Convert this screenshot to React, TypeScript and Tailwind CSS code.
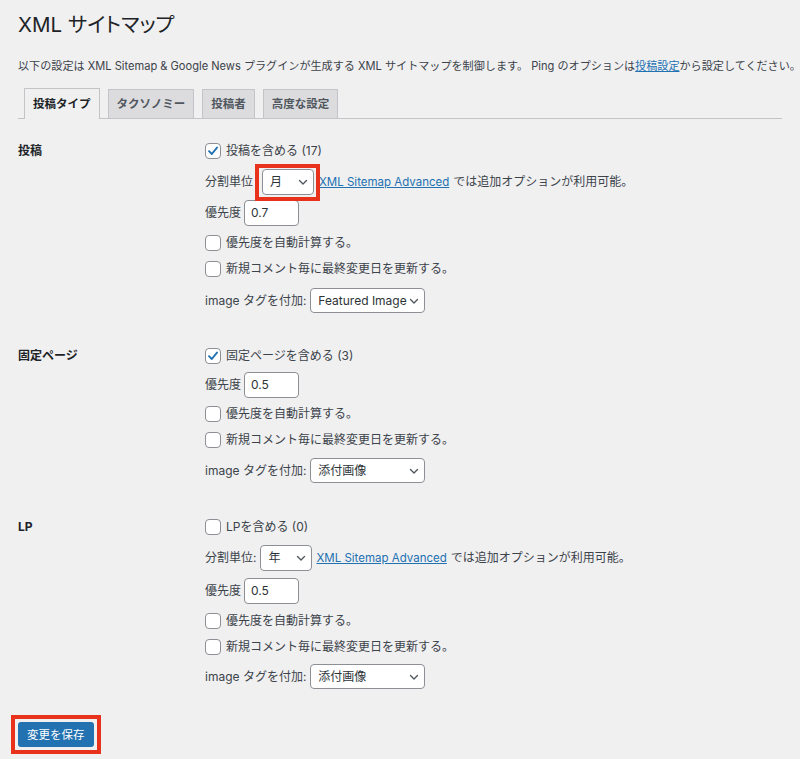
import type { ReactNode } from 'react'

const font = {
  fontFamily: 'Inter, "Noto Sans CJK JP", sans-serif',
}

function Chevron() {
  return (
    <svg width="12" height="12" viewBox="0 0 12 12" fill="none" className="shrink-0">
      <path d="M2.5 4.5 6 8l3.5-3.5" stroke="#50575e" strokeWidth="1.4" strokeLinecap="round" strokeLinejoin="round" />
    </svg>
  )
}

function Checkbox({ checked, label }: { checked?: boolean; label: string }) {
  return (
    <div className="flex h-[20px] items-center gap-[5px]">
      <span className="flex h-[16px] w-[16px] items-center justify-center rounded-[4px] border border-[#8c8f94] bg-white">
        {checked && (
          <svg width="14" height="14" viewBox="0 0 14 14" fill="none">
            <path d="M3 7.2 5.8 10 11 3.6" stroke="#2271b1" strokeWidth="1.9" strokeLinecap="round" strokeLinejoin="round" />
          </svg>
        )}
      </span>
      <span>{label}</span>
    </div>
  )
}

function Select({ value, width, height = 'h-[25px]' }: { value: string; width: string; height?: string }) {
  return (
    <div
      className={`flex ${width} ${height} items-center justify-between rounded-[4px] border border-[#8c8f94] bg-white pr-[4px] pl-[7px] whitespace-nowrap text-[#2c3338]`}
    >
      <span>{value}</span>
      <Chevron />
    </div>
  )
}

function Priority({ value, mt }: { value: string; mt: string }) {
  return (
    <div className={`flex h-[26px] items-center gap-[3px] ${mt}`}>
      <span>優先度</span>
      <div className="flex h-[26px] w-[55px] items-center rounded-[4px] border border-[#8c8f94] bg-white px-[6px] text-[#2c3338]">
        {value}
      </div>
    </div>
  )
}

function SplitRow({ value, mt, highlight }: { value: string; mt: string; highlight?: boolean }) {
  const sel = <Select value={value} width="w-[52px]" height="h-[26px]" />
  return (
    <div className={`flex h-[26px] items-center ${mt}`}>
      <span>分割単位{highlight ? '' : ':'}</span>
      {highlight ? (
        <div className="relative mr-[5px] ml-[9px]">
          {sel}
          <div className="pointer-events-none absolute -top-[5px] -right-[6px] -bottom-[6px] -left-[7px] border-[4px] border-[#e8321b]" />
        </div>
      ) : (
        <div className="mr-[4px] ml-[4px]">{sel}</div>
      )}
      <a className="text-[11.5px] text-[#2271b1] underline">XML Sitemap Advanced</a>
      <span className="ml-[4px]">では追加オプションが利用可能。</span>
    </div>
  )
}

function ImageRow({ value, mt }: { value: string; mt: string }) {
  return (
    <div className={`flex h-[25px] items-center gap-[4px] ${mt}`}>
      <span>image タグを付加:</span>
      <Select value={value} width="w-[115px]" />
    </div>
  )
}

function Section({ label, mt, children }: { label: string; mt: string; children: ReactNode }) {
  return (
    <div className={`flex ${mt}`}>
      <div className="flex h-[20px] w-[187px] shrink-0 items-center font-bold text-[#1d2327]">{label}</div>
      <div className="flex flex-col">{children}</div>
    </div>
  )
}

const tabs = ['投稿タイプ', 'タクソノミー', '投稿者', '高度な設定']

export default function App() {
  return (
    <div className="flex min-h-[759px] flex-col bg-[#f0f0f1] px-[18px] text-[12px] leading-[18px] text-[#3c434a]" style={font}>
      <h1 className="pt-[12px] text-[20.5px] leading-[26px] font-normal text-[#1d2327] [font-feature-settings:'palt']">
        XML サイトマップ
      </h1>
      <p className="mt-[20px] text-[11.1px] leading-[16px] whitespace-nowrap">
        以下の設定は XML Sitemap &amp; Google News プラグインが生成する XML サイトマップを制御します。 Ping のオプションは
        <a className="text-[#2271b1] underline">投稿設定</a>から設定してください。
      </p>

      <div className="mt-[15px] flex h-[30px] items-end gap-[8px] border-b border-[#c3c4c7] pl-[6px]">
        {tabs.map((t, i) => (
          <div
            key={t}
            className={
              i === 0
                ? '-mb-px flex h-[31px] items-center border border-b-0 border-[#c3c4c7] bg-[#f0f0f1] px-[8px] text-[11.5px] font-bold text-[#1d2327]'
                : 'flex h-[29px] items-center border border-b-0 border-[#c3c4c7] bg-[#dcdcde] px-[8px] text-[11.5px] font-bold text-[#50575e]'
            }
          >
            {t}
          </div>
        ))}
      </div>

      <Section label="投稿" mt="mt-[22px]">
        <Checkbox checked label="投稿を含める (17)" />
        <SplitRow value="月" mt="mt-[8px]" highlight />
        <Priority value="0.7" mt="mt-[5px]" />
        <div className="mt-[7px]"><Checkbox label="優先度を自動計算する。" /></div>
        <div className="mt-[6px]"><Checkbox label="新規コメント毎に最終変更日を更新する。" /></div>
        <ImageRow value="Featured Image" mt="mt-[9px]" />
      </Section>

      <Section label="固定ページ" mt="mt-[33px]">
        <Checkbox checked label="固定ページを含める (3)" />
        <Priority value="0.5" mt="mt-[6px]" />
        <div className="mt-[6px]"><Checkbox label="優先度を自動計算する。" /></div>
        <div className="mt-[6px]"><Checkbox label="新規コメント毎に最終変更日を更新する。" /></div>
        <ImageRow value="添付画像" mt="mt-[8px]" />
      </Section>

      <Section label="LP" mt="mt-[34px]">
        <Checkbox label="LPを含める (0)" />
        <SplitRow value="年" mt="mt-[8px]" />
        <Priority value="0.5" mt="mt-[7px]" />
        <div className="mt-[7px]"><Checkbox label="優先度を自動計算する。" /></div>
        <div className="mt-[6px]"><Checkbox label="新規コメント毎に最終変更日を更新する。" /></div>
        <ImageRow value="添付画像" mt="mt-[7px]" />
      </Section>

      <div className="mt-[26px] -ml-[7px] flex self-start border-[4px] border-[#e8321b] p-[3px]">
        <button className="flex h-[25px] items-center rounded-[3px] bg-[#2271b1] px-[9px] text-[11.5px] text-white">
          変更を保存
        </button>
      </div>
    </div>
  )
}
